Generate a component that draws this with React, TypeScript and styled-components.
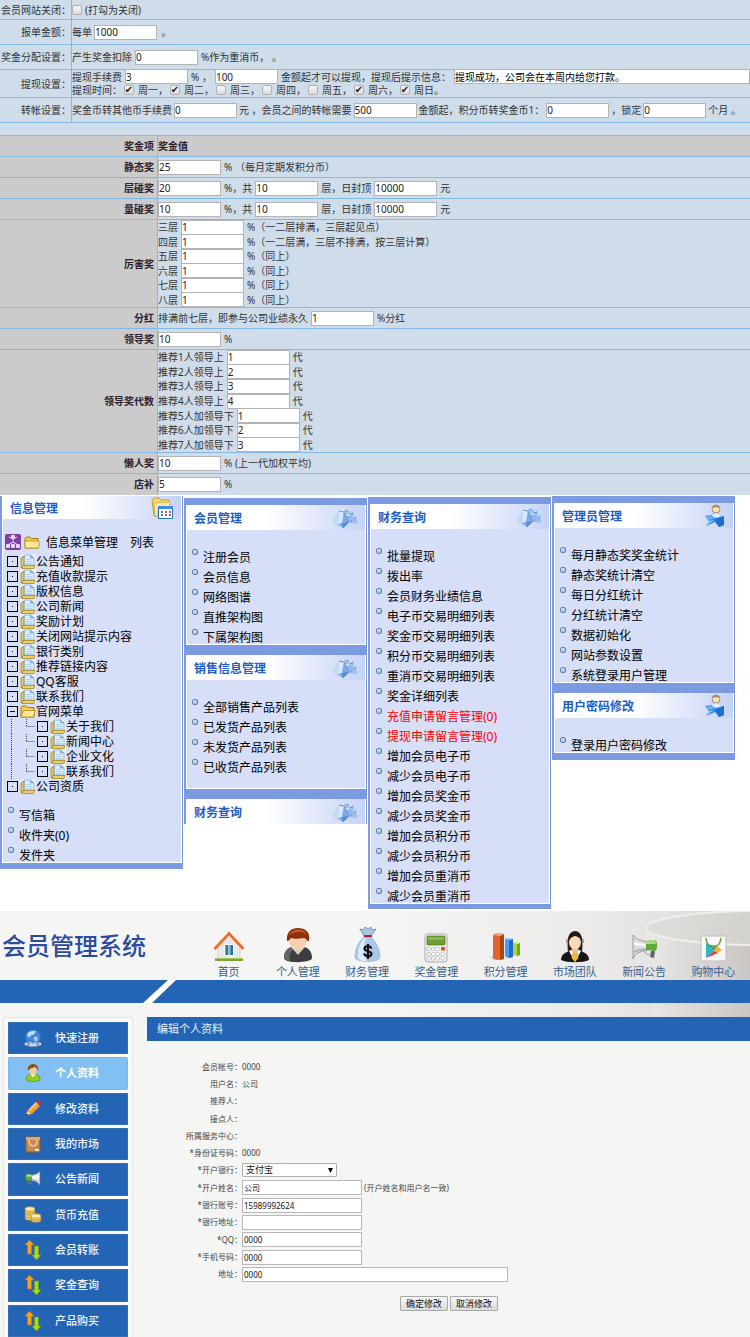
import React from "react";
import styled, { createGlobalStyle, css } from "styled-components";

const GlobalStyle = createGlobalStyle`
  * { box-sizing: border-box; }
  body {
    margin: 0;
    background: #fff;
    font-family: "Noto Sans", "Noto Sans CJK SC", sans-serif;
    font-size: 12px;
    color: #000;
  }
  ul { margin: 0; padding: 0; list-style: none; }
  a { color: inherit; text-decoration: none; }
  svg { flex: none; }
  input, select, button { font-family: inherit; margin: 0; }
`;

const Page = styled.div`
  overflow: hidden;
`;

/* ---------- Parameter settings ---------- */

const SettingsSection = styled.section`
  background: #cfddea;
  color: #333;
  font-size: 10px;
  line-height: 14px;
`;

const SettingsTable = styled.table`
  width: 100%;
  table-layout: fixed;
  border-spacing: 0;
`;

const BonusTable = styled(SettingsTable)`
  margin-top: 12px;
  border-top: 1px solid #84b8e6;

  tbody tr:last-child > * { border-bottom-color: transparent; }
`;

const LabelCell = styled.th<{ $h: number }>`
  width: 72px;
  height: ${(p) => p.$h}px;
  padding: 0;
  font-weight: 400;
  text-align: right;
  white-space: nowrap;
  border-right: 1px solid #84b8e6;
  border-bottom: 1px solid #84b8e6;
`;

const ValueCell = styled.td<{ $h: number }>`
  height: ${(p) => p.$h}px;
  padding: 0;
  border-bottom: 1px solid #84b8e6;
`;

const BonusLabelCell = styled(LabelCell)`
  width: 158px;
  padding-right: 3px;
  font-weight: 700;
  background: #cbcbcb;
  color: #2a2030;
`;

const BonusHeadCell = styled.th`
  padding: 0;
  text-align: left;
  background: #cbcbcb;
  color: #2a2030;
  border-bottom: 1px solid #84b8e6;
`;

const Line = styled.div<{ $tight?: boolean }>`
  display: flex;
  align-items: center;
  gap: ${(p) => (p.$tight ? 2 : 3)}px;
  white-space: pre;
  overflow: hidden;
`;

const DayLine = styled(Line)`
  gap: 2px;
`;

const DayLabel = styled.label`
  display: flex;
  align-items: center;
  gap: 4px;
`;

const StackedLines = styled.div<{ $h: number }>`
  display: flex;
  flex-direction: column;
  height: ${(p) => p.$h}px;

  > div { flex: 1; min-height: 0; overflow: visible; }
`;

const NumberBox = styled.input`
  flex: none;
  width: 63px;
  height: 15px;
  padding: 0;
  font-size: 10px;
  line-height: 12px;
  color: #222;
  background: #fff;
  border: 1px solid #b4b4b4;
  outline: none;
`;

const MessageBox = styled(NumberBox)`
  flex: 1;
  min-width: 0;
  width: auto;
  color: #000;
`;

const Tick = styled.input`
  appearance: none;
  flex: none;
  display: flex;
  align-items: center;
  justify-content: center;
  width: 10px;
  height: 10px;
  background: linear-gradient(#f4f4f4, #dcdcdc);
  border: 1px solid #b0b0b0;
  border-radius: 2px;

  &:checked::after {
    content: "✔";
    font: 10px/10px "DejaVu Sans", sans-serif;
    color: #222;
  }
`;

const Num = ({ value, label, id }: { value: string; label?: string; id?: string }) => (
  <NumberBox type="text" id={id} defaultValue={value} aria-label={label} />
);

const days: [string, boolean][] = [
  ["周一，", true],
  ["周二，", true],
  ["周三，", false],
  ["周四，", false],
  ["周五，", false],
  ["周六，", true],
  ["周日。", true],
];

const layers = [
  ["三层", "%（一二层排满，三层起见点）"],
  ["四层", "%（一二层满，三层不排满，按三层计算）"],
  ["五层", "%（同上）"],
  ["六层", "%（同上）"],
  ["七层", "%（同上）"],
  ["八层", "%（同上）"],
];

const generations = [
  ["推荐1人领导上", "1"],
  ["推荐2人领导上", "2"],
  ["推荐3人领导上", "3"],
  ["推荐4人领导上", "4"],
  ["推荐5人加领导下", "1"],
  ["推荐6人加领导下", "2"],
  ["推荐7人加领导下", "3"],
];

function BonusRow({ name, h = 21, children }: { name: string; h?: number; children: React.ReactNode }) {
  return (
    <tr>
      <BonusLabelCell $h={h} scope="row">{name}</BonusLabelCell>
      <ValueCell $h={h}>{children}</ValueCell>
    </tr>
  );
}

function Settings() {
  return (
    <SettingsSection>
      <SettingsTable>
        <tbody>
          <tr>
            <LabelCell $h={20} scope="row"><label htmlFor="closed">会员网站关闭：</label></LabelCell>
            <ValueCell $h={20}><Line><Tick type="checkbox" id="closed" />(打勾为关闭)</Line></ValueCell>
          </tr>
          <tr>
            <LabelCell $h={25} scope="row"><label htmlFor="order">报单金额：</label></LabelCell>
            <ValueCell $h={25}><Line $tight>每单<Num id="order" value="1000" /> 。</Line></ValueCell>
          </tr>
          <tr>
            <LabelCell $h={25} scope="row"><label htmlFor="deduct">奖金分配设置：</label></LabelCell>
            <ValueCell $h={25}><Line>产生奖金扣除<Num id="deduct" value="0" />%作为重消币， 。</Line></ValueCell>
          </tr>
          <tr>
            <LabelCell $h={28} scope="row"><label htmlFor="fee">提现设置：</label></LabelCell>
            <ValueCell $h={28}>
              <StackedLines $h={27}>
                <Line>
                  提现手续费<Num id="fee" value="3" />% ，<Num value="100" label="提现金额" />
                  金额起才可以提现，提现后提示信息：
                  <MessageBox type="text" aria-label="提现后提示信息" defaultValue="提现成功，公司会在本周内给您打款。" />
                </Line>
                <DayLine>
                  提现时间：
                  {days.map(([d, on]) => (
                    <DayLabel key={d}><Tick type="checkbox" defaultChecked={on} />{d}</DayLabel>
                  ))}
                </DayLine>
              </StackedLines>
            </ValueCell>
          </tr>
          <tr>
            <LabelCell $h={25} scope="row"><label htmlFor="transfer">转帐设置：</label></LabelCell>
            <ValueCell $h={25}>
              <Line $tight>
                奖金币转其他币手续费<Num id="transfer" value="0" />
                元 ，会员之间的转帐需要<Num value="500" label="转帐金额" />
                金额起，积分币转奖金币1：<Num value="0" label="积分币转奖金币" />
                ，锁定<Num value="0" label="锁定月数" />个月 。
              </Line>
            </ValueCell>
          </tr>
        </tbody>
      </SettingsTable>

      <BonusTable>
        <thead>
          <tr>
            <BonusLabelCell $h={21} scope="col">奖金项</BonusLabelCell>
            <BonusHeadCell scope="col">奖金值</BonusHeadCell>
          </tr>
        </thead>
        <tbody>
          <BonusRow name="静态奖"><Line><Num value="25" label="静态奖" />% （每月定期发积分币）</Line></BonusRow>
          {["层碰奖", "量碰奖"].map((name, i) => (
            <BonusRow key={name} name={name}>
              <Line>
                <Num value={i === 0 ? "20" : "10"} label={name} />%，共
                <Num value="10" label={name + "层数"} />层，日封顶
                <Num value="10000" label={name + "日封顶"} />元
              </Line>
            </BonusRow>
          ))}
          <BonusRow name="厉害奖" h={88}>
            <StackedLines $h={87}>
              {layers.map(([l, note]) => (
                <Line key={l}>{l}<Num value="1" label={l} />{note}</Line>
              ))}
            </StackedLines>
          </BonusRow>
          <BonusRow name="分红"><Line>排满前七层，即参与公司业绩永久<Num value="1" label="分红" />%分红</Line></BonusRow>
          <BonusRow name="领导奖"><Line><Num value="10" label="领导奖" />%</Line></BonusRow>
          <BonusRow name="领导奖代数" h={103}>
            <StackedLines $h={102}>
              {generations.map(([l, v]) => (
                <Line key={l}>{l}<Num value={v} label={l} />代</Line>
              ))}
            </StackedLines>
          </BonusRow>
          <BonusRow name="懒人奖"><Line><Num value="10" label="懒人奖" />% (上一代加权平均)</Line></BonusRow>
          <BonusRow name="店补"><Line><Num value="5" label="店补" />%</Line></BonusRow>
        </tbody>
      </BonusTable>
    </SettingsSection>
  );
}

/* ---------- Admin menus ---------- */

const Menus = styled.section`
  display: grid;
  grid-template-columns: repeat(4, minmax(0, 1fr));
  align-items: start;
  column-gap: 1px;
  min-height: 416px;
  padding-right: 15px;
`;

const MenuColumn = styled.div<{ $top: number }>`
  margin-top: ${(p) => p.$top}px;
  background: #7b9ae0;
  padding: 0 1px 0 2px;
`;

const MenuBar = styled.div<{ $h: number }>`
  height: ${(p) => p.$h}px;
`;

const MenuHeader = styled.header<{ $h?: number }>`
  display: flex;
  align-items: center;
  justify-content: space-between;
  height: ${(p) => p.$h ?? 25}px;
  padding: 0 8px;
  background: linear-gradient(90deg, #fff 45%, #c6d3f7);
  border-right: 1px solid #fff;
`;

const MenuTitle = styled.h2`
  margin: 0;
  padding-top: 3px;
  font-size: 12px;
  line-height: 16px;
  font-weight: 700;
  color: #215dc6;
`;

const MenuBody = styled.div<{ $top?: number; $bottom?: number }>`
  padding: ${(p) => p.$top ?? 14}px 0 ${(p) => p.$bottom ?? 0}px;
  background: #d6dff7;
  border: solid #fff;
  border-width: 0 1px 1px;
`;

const MenuItem = styled.li<{ $hot?: boolean }>`
  display: flex;
  align-items: flex-start;
  gap: 5px;
  height: 20px;
  padding: 5px 0 0 5px;
  line-height: 18px;
  white-space: nowrap;
  color: ${(p) => (p.$hot ? "#f00" : "#000")};
`;

const Bullet = styled.span`
  flex: none;
  width: 6px;
  height: 6px;
  border: 1px solid #6d7c95;
  border-radius: 2px;
  background: linear-gradient(135deg, #dff0ff, #7fb8f5);
`;

const TreeRoot = styled.div`
  display: flex;
  align-items: center;
  gap: 3px;
  height: 20px;
  padding-left: 2px;
  white-space: pre;

  a { padding-left: 3px; }
  a + a { padding-left: 9px; }
`;

const TreeList = styled.ul`
  && { padding-top: 2px; }
`;

const TreeRow = styled.li`
  display: flex;
  align-items: center;
  gap: 2px;
  height: 15px;
  padding-left: 4px;
  line-height: 15px;
  white-space: nowrap;
`;

const TreeEntry = styled.a`
  display: flex;
  align-items: center;
`;

const Toggle = styled.button`
  display: flex;
  align-items: center;
  justify-content: center;
  flex: none;
  width: 11px;
  height: 11px;
  padding: 0;
  border: 1px solid #000;
  background: #d6dff7;
`;

const MailList = styled.div`
  padding-top: 8px;
`;

const CubeIcon = () => (
  <svg width="24" height="20" viewBox="0 0 24 20">
    <path d="M5 4 13 0l10 5-9 4z" fill="#e3ecfd" opacity=".7" />
    <path d="M0 13 6 3l5 1 5 10-6 6-7-3z" fill="#9dc2f3" />
    <path d="M6 3l-1 13 5 4-7-3-3-4z" fill="#bfd9fa" />
    <path d="M6 3l5 1-2 11-4 1z" fill="#d6e8fd" />
    <path d="M11 4l5 10-6 6-5-4 4-1z" fill="#7eabea" />
    <path d="M9 15l7-1-6 6z" fill="#5b8cd6" />
    <path d="M6 3l5 1 5 10-6 6" fill="none" stroke="#4f80cc" strokeWidth=".8" />
    <g fill="#a9cdf8" stroke="#6a9be0" strokeWidth=".5">
      <rect x="11.500" y="1.500" width="4" height="4" rx="1.300" />
      <rect x="16" y="3.500" width="4.500" height="4" rx="1.300" />
      <rect x="14" y="7" width="4.500" height="4" rx="1.300" />
      <rect x="19" y="8" width="4" height="4" rx="1.300" />
      <rect x="16" y="11" width="4" height="3.500" rx="1.300" />
      <rect x="20.500" y="12.500" width="3" height="3" rx="1" />
    </g>
    <path d="M12.500 3h2M17.500 5.500h2M15 9h2M20.500 10h2M17.500 13h1.500" stroke="#3f78c8" strokeWidth="1.200" />
    <path d="M12.500 2h1.500M17 4.200h2M15 7.700h2M20 8.700h2" stroke="#fff" strokeWidth=".8" />
  </svg>
);

const AdminIcon = () => (
  <svg width="20" height="23" viewBox="0 0 20 23">
    <circle cx="11" cy="5" r="4" fill="#f9e2b4" stroke="#8c7c62" strokeWidth=".8" />
    <path d="M7 4c1-3 6-4 8 0-2-1-5-1-8 0z" fill="#a98c5c" />
    <path d="M6 14c0-4 2-5 5-5s6 2 6 5l-5 1z" fill="#e2edfb" stroke="#86a8d6" strokeWidth=".6" />
    <path d="M0 12l6-1 4 3 9-2v9l-5 2-4-5-9 4 3-5z" fill="#2f88e6" />
    <path d="M0 12l6-1 4 3-6 2z" fill="#63b1fa" />
    <path d="M10 16l9-4v9l-5 2z" fill="#1c6fd3" />
    <path d="M4 17l5-1-8 6z" fill="#8ec7fb" />
  </svg>
);

const FolderTableIcon = () => (
  <svg width="22" height="22" viewBox="0 0 22 22">
    <path d="M1 3l2-2h5l2 2h8v15l-15 1z" fill="#f4d675" stroke="#c79c2c" />
    <path d="M3 6l16-1v5H7v9H4z" fill="#fbeaa6" stroke="#d0a83e" strokeWidth=".7" />
    <rect x="7.500" y="9.500" width="14" height="12" fill="#fff" stroke="#2f6fc4" />
    <path d="M7 9h15v3H7z" fill="#3b8be8" />
    <path d="M10 15h2M14 15h2M18 15h2M10 18h2M14 18h2M18 18h2" stroke="#5477a8" strokeWidth="2" />
    <path d="M14 15h2M18 18h2" stroke="#d2564b" strokeWidth="2" />
  </svg>
);

const NetworkIcon = () => (
  <svg width="16" height="16" viewBox="0 0 16 16">
    <rect width="16" height="16" rx="2" fill="#7e3fa0" />
    <path d="M8 4v5M3 11 8 8l5 3M4 3l4 2 4-2" stroke="#d9b8ea" fill="none" strokeWidth="1.200" />
    <g fill="#ecd6f6">
      <rect x="6" y="1" width="4" height="4" rx="1" /><rect x="1" y="10" width="4" height="4" rx="1" />
      <rect x="6" y="10" width="4" height="4" rx="1" /><rect x="11" y="10" width="4" height="4" rx="1" />
    </g>
  </svg>
);

const FolderIcon = ({ open }: { open?: boolean }) => (
  <svg width="16" height="13" viewBox="0 0 16 13">
    <path d="M1 2.500 2.500 1H6l1.500 1.500H14V12H1z" fill="#f2cc4d" stroke="#a67c13" />
    <path d={open ? "M3.500 5.500h12L13 12H1z" : "M1 5h14v6.500l-1 .5H1z"} fill="#fdeb98" stroke="#b58b1e" strokeWidth=".8" />
  </svg>
);

const PaperFolderIcon = () => (
  <svg width="16" height="15" viewBox="0 0 16 15">
    <rect width="16" height="15" fill="#e6eefb" />
    <path d="M1 4l3-2v11l-3 1z" fill="#e8c659" stroke="#9c7a1e" strokeWidth=".7" />
    <path d="M4.500 1h6L14 4v7H4.500z" fill="#d9edfc" stroke="#7fa6cc" strokeWidth=".7" />
    <path d="M10.500 1v3H14" fill="#7fb6e6" stroke="#7fa6cc" strokeWidth=".7" />
    <path d="M6 5.500h5M6 7.500h6M6 9.500h6" stroke="#a9cbe8" strokeWidth=".8" />
    <path d="M3 11.500h12l-1 3H2z" fill="#ecd06c" stroke="#9c7a1e" strokeWidth=".7" />
  </svg>
);

const ToggleMark = ({ open }: { open?: boolean }) => (
  <svg width="5" height="3" viewBox="0 0 5 3">
    <rect x={open ? 0 : 2} y="1" width={open ? 5 : 1} height="1" fill="#000" />
  </svg>
);

const Branch = () => (
  <svg width="28" height="15" viewBox="0 0 28 15">
    <path d="M4.500 0v15M19.500 0v8M19.500 7.500h9" stroke="#444" strokeDasharray="1 1" fill="none" />
  </svg>
);

const MenuList = ({ items }: { items: string[] }) => (
  <ul>
    {items.map((t) => (
      <MenuItem key={t} $hot={t.endsWith("管理(0)")}><Bullet /><a href="#menu">{t}</a></MenuItem>
    ))}
  </ul>
);

const TreeLeaf = ({ text, nested }: { text: string; nested?: boolean }) => (
  <TreeRow>
    {nested && <Branch />}
    <Toggle type="button" aria-label={text}><ToggleMark /></Toggle>
    <TreeEntry href="#node"><PaperFolderIcon />{text}</TreeEntry>
  </TreeRow>
);

const treeTop = ["公告通知", "充值收款提示", "版权信息", "公司新闻", "奖励计划", "关闭网站提示内容", "银行类别", "推荐链接内容", "QQ客服", "联系我们"];
const treeNested = ["关于我们", "新闻中心", "企业文化", "联系我们"];

function AdminMenus() {
  return (
    <Menus>
      <MenuColumn $top={1}>
        <MenuHeader $h={23}><MenuTitle>信息管理</MenuTitle><FolderTableIcon /></MenuHeader>
        <MenuBody $top={13}>
          <TreeRoot><NetworkIcon /><FolderIcon /><a href="#tree">信息菜单管理</a><a href="#list">列表</a></TreeRoot>
          <TreeList>
            {treeTop.map((t) => <TreeLeaf key={t} text={t} />)}
            <TreeRow>
              <Toggle type="button" aria-label="官网菜单"><ToggleMark open /></Toggle>
              <TreeEntry href="#node"><FolderIcon open />官网菜单</TreeEntry>
            </TreeRow>
            {treeNested.map((t) => <TreeLeaf key={t} text={t} nested />)}
            <TreeLeaf text="公司资质" />
          </TreeList>
          <MailList><MenuList items={["写信箱", "收件夹(0)", "发件夹"]} /></MailList>
        </MenuBody>
        <MenuBar $h={6} />
      </MenuColumn>

      <MenuColumn $top={3}>
        <MenuBar $h={7} />
        <MenuHeader><MenuTitle>会员管理</MenuTitle><CubeIcon /></MenuHeader>
        <MenuBody><MenuList items={["注册会员", "会员信息", "网络图谱", "直推架构图", "下属架构图"]} /></MenuBody>
        <MenuBar $h={10} />
        <MenuHeader><MenuTitle>销售信息管理</MenuTitle><CubeIcon /></MenuHeader>
        <MenuBody $bottom={14}><MenuList items={["全部销售产品列表", "已发货产品列表", "未发货产品列表", "已收货产品列表"]} /></MenuBody>
        <MenuBar $h={10} />
        <MenuHeader><MenuTitle>财务查询</MenuTitle><CubeIcon /></MenuHeader>
      </MenuColumn>

      <MenuColumn $top={2}>
        <MenuBar $h={7} />
        <MenuHeader><MenuTitle>财务查询</MenuTitle><CubeIcon /></MenuHeader>
        <MenuBody>
          <MenuList
            items={[
              "批量提现", "拨出率", "会员财务业绩信息", "电子币交易明细列表", "奖金币交易明细列表",
              "积分币交易明细列表", "重消币交易明细列表", "奖金详细列表", "充值申请留言管理(0)",
              "提现申请留言管理(0)", "增加会员电子币", "减少会员电子币", "增加会员奖金币", "减少会员奖金币",
              "增加会员积分币", "减少会员积分币", "增加会员重消币", "减少会员重消币",
            ]}
          />
        </MenuBody>
        <MenuBar $h={5} />
      </MenuColumn>

      <MenuColumn $top={1}>
        <MenuBar $h={7} />
        <MenuHeader><MenuTitle>管理员管理</MenuTitle><AdminIcon /></MenuHeader>
        <MenuBody>
          <MenuList items={["每月静态奖奖金统计", "静态奖统计清空", "每日分红统计", "分红统计清空", "数据初始化", "网站参数设置", "系统登录用户管理"]} />
        </MenuBody>
        <MenuBar $h={10} />
        <MenuHeader><MenuTitle>用户密码修改</MenuTitle><AdminIcon /></MenuHeader>
        <MenuBody><MenuList items={["登录用户密码修改"]} /></MenuBody>
        <MenuBar $h={7} />
      </MenuColumn>
    </Menus>
  );
}

/* ---------- Member system ---------- */

const Member = styled.section`
  position: relative;
  background: #f5f5f3;
`;

const Backdrop = styled.svg`
  position: absolute;
  top: 0;
  right: 0;
`;

const TopBar = styled.header`
  position: relative;
  display: flex;
  align-items: center;
  height: 69px;
  padding-right: 2px;
`;

const Brand = styled.h1`
  flex: none;
  width: 194px;
  margin: 0;
  padding-left: 2px;
  font-size: 24px;
  line-height: 32px;
  font-weight: 500;
  color: #2b4ba2;
`;

const Nav = styled.nav`
  flex: 1;
  display: grid;
  grid-template-columns: repeat(8, 1fr);
  height: 69px;
`;

const NavLink = styled.a`
  display: flex;
  flex-direction: column;
  align-items: center;
  justify-content: flex-end;
  gap: 1px;
  font-size: 11px;
  line-height: 16px;
  white-space: nowrap;
  color: #355f8c;
`;

const BlueStrip = styled.div`
  position: relative;
  height: 23px;
  padding-left: 143px;
  background: #2464b4;
`;

const Columns = styled.div`
  position: relative;
  display: flex;
  align-items: stretch;
  gap: 14px;
  padding: 14px 0 0 3px;
`;

const Sidebar = styled.nav`
  flex: none;
  width: 130px;
  padding: 4px 4px 0;
  border: 1px solid #e4e4e4;
  border-bottom: 0;
  background: #f9f9f9;
`;

const SideList = styled.ul`
  display: grid;
  grid-auto-rows: 1fr;
  row-gap: 3px;
  min-height: 315px;
`;

const SideLink = styled.a<{ $active?: boolean }>`
  display: flex;
  align-items: center;
  gap: 11px;
  height: 100%;
  padding-left: 13px;
  font-size: 11px;
  line-height: 16px;
  font-weight: 500;
  color: #f2f6fc;
  background: #2464b4;
  border: 1px solid #3a6fb5;
  ${(p) =>
    p.$active &&
    css`
      font-weight: 700;
      color: #fff;
      background: #82c0f4;
      border-color: #76b6ee;
      border-radius: 2px;
    `}
`;

const Content = styled.main`
  flex: 1;
  min-width: 0;
  background: #f5f5f3;
`;

const ContentTitle = styled.h2`
  height: 24px;
  margin: 0;
  padding-left: 10px;
  font-size: 11px;
  line-height: 24px;
  font-weight: 400;
  color: #e6effa;
  background: #2464b4;
`;

const FormGrid = styled.div`
  display: grid;
  grid-auto-rows: 1fr;
  min-height: 225px;
  margin-top: 17px;
  font-size: 8px;
  line-height: 12px;
  color: #444;
`;

const FormRow = styled.div`
  display: flex;
  align-items: center;
  gap: 2px;
  white-space: nowrap;

  > :first-child {
    width: 95px;
    margin-right: -2px;
    text-align: right;
  }
`;

const TextBox = styled.input<{ $wide?: boolean }>`
  width: ${(p) => (p.$wide ? 266 : 120)}px;
  height: 15px;
  padding: 0 1px;
  font-size: 8px;
  line-height: 12px;
  color: #111;
  background: #fff;
  border: 1px solid #b8b8b8;
  outline: none;
`;

const SelectWrap = styled.span`
  position: relative;
  display: flex;
  align-items: center;
`;

const BankSelect = styled.select`
  appearance: none;
  width: 95px;
  height: 14px;
  padding: 0 3px;
  font-size: 9px;
  line-height: 12px;
  color: #111;
  background: #fff;
  border: 1px solid #b0b0b0;
  border-radius: 1px;
`;

const Caret = styled.svg`
  position: absolute;
  right: 4px;
  pointer-events: none;
`;

const Actions = styled.div`
  display: flex;
  gap: 2px;
  padding: 13px 0 0 253px;
`;

const ActionButton = styled.button`
  width: 48px;
  height: 15px;
  padding: 0;
  font-size: 9px;
  line-height: 12px;
  white-space: nowrap;
  color: #111;
  background: linear-gradient(#f8f8f8, #dcdcdc);
  border: 1px solid #a8a8a8;
  border-radius: 1px;
`;

const HomeIcon = () => (
  <svg width="32" height="32" viewBox="0 0 32 32">
    <path d="M5 14 16 4l11 10v14H5z" fill="#e9e9ea" stroke="#b9babd" strokeWidth=".6" />
    <path d="M2 27h28v3H2z" fill="#7aa536" />
    <path d="M2 27h28v1H2z" fill="#a4ca61" />
    <path d="M1.500 18 16 2.500l14.500 15.500" fill="none" stroke="#f16a21" strokeWidth="2.600" />
    <rect x="11" y="13" width="10" height="12" fill="#fff" />
    <path d="M12 14h3.400v10H12zM16.600 14H20v10h-3.400z" fill="#2f7096" />
    <path d="M12 14h1.300v10H12zM16.600 14h1.300v10h-1.300z" fill="#5fa0c0" />
  </svg>
);

const PersonIcon = () => (
  <svg width="30" height="36" viewBox="0 0 30 36">
    <path d="M1 31c0-8 5-12 14-12s14 4 14 12c0 5-28 6-28 0z" fill="#3c3d40" />
    <path d="M1 31c0-8 5-12 14-12-8 3-9 10-8 15-4-1-6-2-6-3z" fill="#626468" />
    <path d="M8 20l7 8 7-8-3-2h-8z" fill="#b7dbf3" />
    <path d="M11 18h8v4l-4 5-4-5z" fill="#eec29d" />
    <ellipse cx="15" cy="14" rx="9" ry="9" fill="#f4d0b2" />
    <path d="M4 14C3 5 8 1 15 1s13 4 11 13c-2 1-3-3-5-3-5 1-10 1-13 0-1 1-2 3-4 3z" fill="#8d3209" />
    <path d="M6 8c3-6 13-8 18-1-5-3-12-3-18 1z" fill="#c25f28" />
  </svg>
);

const MoneyIcon = () => (
  <svg width="27" height="37" viewBox="0 0 27 37">
    <path d="M10 11C3 17 1 25 1 31c0 6 25 6 25 0 0-7-3-14-9-20z" fill="#a9c8ea" stroke="#7f9fc6" strokeWidth=".5" />
    <path d="M10 12C5 18 4 24 4 32c2 3 7 4 9 3-4-6-4-14-1-23z" fill="#ddebfa" />
    <path d="M10 10 6 3l3 1 2-3 3 2 3-2 1 3 4-1-5 7z" fill="#a9c3e2" stroke="#4f6f9a" strokeWidth=".6" />
    <path d="M10 10h8" stroke="#b0252c" strokeWidth="2" />
    <path d="M17.500 22.500c-1-3-7-3-7 0 0 3.500 7 2 7 5.500 0 3-6.500 3-7.500-.5M14 18v15" fill="none" stroke="#111" strokeWidth="2.200" />
  </svg>
);

const CalculatorIcon = () => (
  <svg width="24" height="30" viewBox="0 0 24 30">
    <rect x="1" y="1" width="22" height="28" rx="2.500" fill="#f0f0f0" stroke="#aaa" />
    <rect x="3" y="3" width="18" height="9" rx="1" fill="#6f9c35" stroke="#537a20" strokeWidth=".7" />
    <path d="M4 4h16v3H4z" fill="#8cb750" />
    <g fill="#fff" stroke="#aaa" strokeWidth=".6">
      <rect x="3" y="14.500" width="3.500" height="3" rx="1" /><rect x="7.500" y="14.500" width="3.500" height="3" rx="1" /><rect x="12" y="14.500" width="3.500" height="3" rx="1" />
      <rect x="3" y="19.500" width="3.500" height="3" rx="1" /><rect x="7.500" y="19.500" width="3.500" height="3" rx="1" /><rect x="12" y="19.500" width="3.500" height="3" rx="1" />
      <rect x="3" y="24" width="3.500" height="3" rx="1" /><rect x="7.500" y="24" width="3.500" height="3" rx="1" /><rect x="12" y="24" width="3.500" height="3" rx="1" />
      <rect x="17" y="19.500" width="3.500" height="3" rx="1" /><rect x="17" y="24" width="3.500" height="3" rx="1" />
    </g>
    <rect x="17" y="14" width="4" height="3.500" fill="#df5326" />
  </svg>
);

const ChartIcon = () => (
  <svg width="30" height="31" viewBox="0 0 30 31">
    <path d="M0 26l3-3 4 5-4 0z" fill="#999" opacity=".5" />
    <path d="M2 3l3-2 8 1v25l-7 1-4-2z" fill="#e0652a" />
    <path d="M9 4l4-2v25l-4 1z" fill="#b24312" />
    <path d="M2 3l3-2 8 1-4 2z" fill="#f6a57a" />
    <path d="M14 7l2-1 6 1v18l-5 1-3-2z" fill="#4a9bf2" />
    <path d="M18 8l4-1v18l-4 1z" fill="#2468cf" />
    <path d="M14 7l2-1 6 1-4 1z" fill="#a5d0fb" />
    <path d="M22 11l2-1 5 1v12l-4 1-3-1z" fill="#a6d93f" />
    <path d="M26 12l3-1v12l-3 1z" fill="#6dab1c" />
    <path d="M22 11l2-1 5 1-3 1z" fill="#d6f29a" />
  </svg>
);

const AgentIcon = () => (
  <svg width="28" height="33" viewBox="0 0 28 33">
    <path d="M7 22C6 14 6 2 14 1c8 0 8 13 7 21z" fill="#35201a" />
    <path d="M0 30c0-5 4-8 9-9h10c5 1 9 4 9 9-6 3-22 3-28 0z" fill="#15161a" />
    <path d="M8 21l6 11 6-11-4-2h-4z" fill="#fff" />
    <path d="M11.500 22h5l1 6-3.500 4-3.500-4z" fill="#e9b93a" />
    <path d="M11 17h6v4l-3 3-3-3z" fill="#e9bd98" />
    <ellipse cx="14" cy="12" rx="6" ry="7.500" fill="#f8dabb" />
    <path d="M7 12C7 4 10 2 14 2s7 2 7 10c-2-3-2-5-7-6-4 1-5 3-7 6z" fill="#2a1813" />
    <path d="M6 9v4M22 9v4" stroke="#888" strokeWidth="1.500" />
  </svg>
);

const HornIcon = ({ flip }: { flip?: boolean }) => (
  <svg width={flip ? 16 : 27} height={flip ? 18 : 30} viewBox="0 0 27 28">
    <g transform={flip ? "translate(27 0) scale(-1 1)" : undefined}>
      <path d="M2 1c2 4 8 6 15 7v8C10 17 4 19 2 25z" fill={flip ? "#eef1f4" : "#dcdde0"} stroke="#888" strokeWidth=".8" />
      <path d="M3 9c4 2 9 2 13 2" stroke="#fff" strokeWidth="2.400" fill="none" />
      <path d="M3 18c4-2 9-3 13-3" stroke="#a9abb0" strokeWidth="1.400" fill="none" />
      <path d="M15 7l9-1c3 2 3 9 0 11l-9-1z" fill="#5fa93a" />
      <path d="M15 7l9-1 1 4H15z" fill="#a7dc86" />
      <path d="M20 17l4 0-1 7-4-1z" fill="#666" />
      <path d="M14 17c0 3 3 4 6 4" stroke="#999" fill="none" />
    </g>
  </svg>
);

const ShopIcon = () => (
  <svg width="27" height="28" viewBox="0 0 27 28">
    <rect x="1" y="1" width="25" height="25" rx="1.500" fill="#f7f7f7" stroke="#bdbdbd" />
    <path d="M6 3c1 8 4 8 8 8s6-1 7-8" fill="none" stroke="#6b963f" strokeWidth="1.400" />
    <path d="M6 8l8 8-8 7z" fill="#2cb5c8" />
    <path d="M6 8l8 4 4-2-4 6z" fill="#3fa45a" />
    <path d="M14 16l3-5 5 4-4 3z" fill="#f2b52b" />
    <path d="M6 23l8-7 4 2z" fill="#de3b52" />
  </svg>
);

const GlobeIcon = () => (
  <svg width="18" height="19" viewBox="0 0 18 19">
    <circle cx="9" cy="8" r="7.500" fill="#3f87da" />
    <path d="M4 4c2-2 7-3 8-1-2 1-2 3-4 3s-1 3-3 2-2-2-1-4z" fill="#c5e2fa" />
    <path d="M10 8c2-1 4 0 4 2-1 2-2 3-3 2s-2-3-1-4z" fill="#a6cef4" />
    <path d="M2 15h5M11 15h5M6 16h6" stroke="#cfd4da" strokeWidth="3" strokeLinecap="round" />
    <path d="M3 15h3M12 15h3" stroke="#56606c" strokeWidth="1" />
  </svg>
);

const UserIcon = () => (
  <svg width="16" height="18" viewBox="0 0 16 18">
    <path d="M1 16c0-5 3-6 7-6s7 1 7 6c-3 2-11 2-14 0z" fill="#93cc26" stroke="#5e8f10" strokeWidth=".7" />
    <path d="M5 10l3 3 3-3z" fill="#fff" />
    <ellipse cx="8" cy="6" rx="4" ry="5" fill="#f3caa0" />
    <path d="M3 7C2 2 5 0 8 0s6 2 5 7c-1-1-1-3-3-4-2 1-5 1-7 4z" fill="#8a5320" />
  </svg>
);

const PencilIcon = () => (
  <svg width="17" height="17" viewBox="0 0 17 17">
    <path d="M1 15l2-5 8-8 4 4-8 8z" fill="#f29a33" />
    <path d="M4 9l7-7 1.500 1.500-8 8z" fill="#fcc577" />
    <path d="M11 2l2-1.500c2 0 3.500 2 3 3.500L15 6z" fill="#ba3a2e" />
    <path d="M1 15l1.500-4 3 3z" fill="#f5dcb4" />
    <path d="M1 15.500l.7-2 1.500 1.300z" fill="#222" />
  </svg>
);

const BagIcon = () => (
  <svg width="16" height="17" viewBox="0 0 16 17">
    <path d="M1 1h14v15H1z" fill="#c28b53" stroke="#8d5c2c" />
    <path d="M1 1h14v3H1z" fill="#d9a873" />
    <path d="M4 4c0 8 8 8 8 0" fill="none" stroke="#f1d9b8" strokeWidth="1.200" />
    <path d="M10 14h4" stroke="#f1e4d0" strokeWidth="2" />
  </svg>
);

const CoinsIcon = () => (
  <svg width="18" height="17" viewBox="0 0 18 17">
    <g fill="#f0cd6c" stroke="#b88a2b" strokeWidth=".7">
      <ellipse cx="6" cy="12" rx="5" ry="2.200" /><ellipse cx="6" cy="9.500" rx="5" ry="2.200" /><ellipse cx="6" cy="7" rx="5" ry="2.200" />
      <ellipse cx="6" cy="5" rx="5" ry="2.200" /><ellipse cx="6" cy="3" rx="5" ry="2.200" fill="#fbe9ab" />
      <ellipse cx="12" cy="14" rx="5" ry="2.200" /><ellipse cx="12" cy="12" rx="5" ry="2.200" /><ellipse cx="12" cy="10" rx="5" ry="2.200" fill="#fbe9ab" />
    </g>
  </svg>
);

const ArrowsIcon = () => (
  <svg width="16" height="20" viewBox="0 0 16 20">
    <path d="M4.500 0 9 5H6.500v9h-4V5H0z" fill="#f7a21c" stroke="#c87408" strokeWidth=".6" />
    <path d="M11.500 20 16 15h-2.500V6h-4v9H7z" fill="#a9d62c" stroke="#6b9a10" strokeWidth=".6" />
  </svg>
);

const IconSlot = styled.span`
  display: flex;
  align-items: center;
  justify-content: center;
  width: 22px;
`;

const navItems: [string, React.ReactNode][] = [
  ["首页", <HomeIcon />],
  ["个人管理", <PersonIcon />],
  ["财务管理", <MoneyIcon />],
  ["奖金管理", <CalculatorIcon />],
  ["积分管理", <ChartIcon />],
  ["市场团队", <AgentIcon />],
  ["新闻公告", <HornIcon />],
  ["购物中心", <ShopIcon />],
];

const sideItems: [string, React.ReactNode][] = [
  ["快速注册", <GlobeIcon />],
  ["个人资料", <UserIcon />],
  ["修改资料", <PencilIcon />],
  ["我的市场", <BagIcon />],
  ["公告新闻", <HornIcon flip />],
  ["货币充值", <CoinsIcon />],
  ["会员转账", <ArrowsIcon />],
  ["奖金查询", <ArrowsIcon />],
  ["产品购买", <ArrowsIcon />],
];

const facts = [
  ["会员帐号：", "0000"],
  ["用户名：", "公司"],
  ["推荐人：", ""],
  ["接点人：", ""],
  ["所属服务中心：", ""],
  ["*身份证号码：", "0000"],
];

const fields = [
  { id: "holder", label: "*开户姓名：", value: "公司", note: "(开户姓名和用户名一致)" },
  { id: "account", label: "*银行账号：", value: "15989992624" },
  { id: "branch", label: "*银行地址：", value: "" },
  { id: "qq", label: "*QQ：", value: "0000" },
  { id: "mobile", label: "*手机号码：", value: "0000" },
  { id: "address", label: "地址：", value: "0000", wide: true },
];

function MemberSystem() {
  return (
    <Member>
      <Backdrop width="375" height="106" viewBox="0 0 375 106" aria-hidden="true">
        <defs>
          <linearGradient id="shade"><stop offset="0" stopColor="#f5f5f3" /><stop offset=".6" stopColor="#ebeae8" /><stop offset="1" stopColor="#dad7d5" /></linearGradient>
          <linearGradient id="mug"><stop offset="0" stopColor="#eae8e6" /><stop offset="1" stopColor="#c9c6c3" /></linearGradient>
          <linearGradient id="inside"><stop offset="0" stopColor="#e0dedb" /><stop offset="1" stopColor="#c6c3c0" /></linearGradient>
        </defs>
        <path d="M0 0h375v106H0z" fill="url(#shade)" />
        <path d="M271 20c2 40 4 70 8 86h96V20z" fill="url(#mug)" />
        <ellipse cx="385" cy="17" rx="114" ry="17" fill="url(#inside)" stroke="#efeeed" strokeWidth="2" />
      </Backdrop>
      <TopBar>
        <Brand>会员管理系统</Brand>
        <Nav>
          {navItems.map(([t, icon]) => (
            <NavLink key={t} href="#nav">{icon}{t}</NavLink>
          ))}
        </Nav>
      </TopBar>
      <BlueStrip>
        <svg width="33" height="23" viewBox="0 0 33 23"><path d="M25 0h8L9 23H0z" fill="#fff" /></svg>
      </BlueStrip>
      <Columns>
        <Sidebar>
          <SideList>
            {sideItems.map(([t, icon]) => (
              <li key={t}>
                <SideLink href="#side" $active={t === "个人资料"}><IconSlot>{icon}</IconSlot>{t}</SideLink>
              </li>
            ))}
          </SideList>
        </Sidebar>
        <Content>
          <ContentTitle>编辑个人资料</ContentTitle>
          <form onSubmit={(e) => e.preventDefault()}>
            <FormGrid>
              {facts.map(([k, v]) => (
                <FormRow key={k}><span>{k}</span><span>{v}</span></FormRow>
              ))}
              <FormRow>
                <label htmlFor="bank">*开户银行：</label>
                <SelectWrap>
                  <BankSelect id="bank"><option>支付宝</option></BankSelect>
                  <Caret width="5" height="5" viewBox="0 0 5 5"><path d="M0 0h5L2.500 5z" fill="#000" /></Caret>
                </SelectWrap>
              </FormRow>
              {fields.map((f) => (
                <FormRow key={f.id}>
                  <label htmlFor={f.id}>{f.label}</label>
                  <TextBox id={f.id} type="text" defaultValue={f.value} $wide={f.wide} />
                  {f.note && <span>{f.note}</span>}
                </FormRow>
              ))}
            </FormGrid>
            <Actions>
              <ActionButton type="submit">确定修改</ActionButton>
              <ActionButton type="reset">取消修改</ActionButton>
            </Actions>
          </form>
        </Content>
      </Columns>
    </Member>
  );
}

export default function App() {
  return (
    <Page>
      <GlobalStyle />
      <Settings />
      <AdminMenus />
      <MemberSystem />
    </Page>
  );
}
